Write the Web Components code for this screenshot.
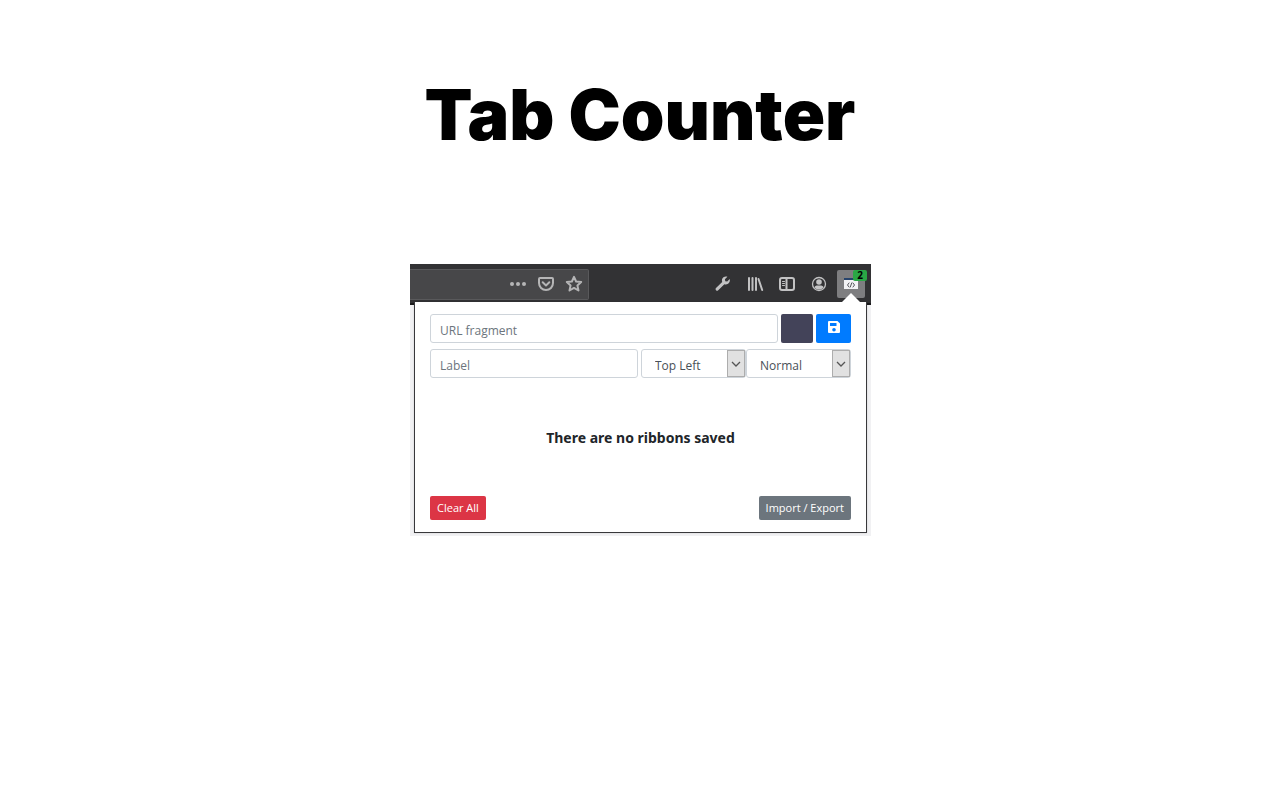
<!DOCTYPE html>
<html lang="en">
<head>
<meta charset="utf-8">
<title>Tab Counter</title>
<style>
  body { margin: 0; background: #fff; color: #212529; font-family: "Open Sans", "Noto Sans", sans-serif; font-size: 12px; }
</style>
</head>
<body>
<promo-page>
  <span slot="title">Tab Counter</span>
  <browser-toolbar></browser-toolbar>
  <ribbon-panel></ribbon-panel>
</promo-page>

<template id="promo-page">
  <style>
    :host { display: flex; flex-direction: column; align-items: center; padding-top: 66px; }
    h1 { margin: 0; color: #000; font: 900 70px/98px Inter, sans-serif; }
    main { width: 100%; max-width: 461px; margin: 100px 0 0 1px; padding-bottom: 3px; background: #f1f1f3; }
  </style>
  <h1><slot name="title"></slot></h1>
  <main><slot></slot></main>
</template>

<template id="browser-toolbar">
  <style>
    :host { display: flex; justify-content: space-between; box-sizing: border-box; height: 41px; padding: 5px 6px 5px 0; background: #323234; border-bottom: 2px solid #1a1a1c; }
    .address { display: flex; flex: 0 1 179px; box-sizing: border-box; height: 31px; align-items: center; justify-content: flex-end; gap: 10px; padding: 0 5px 2px 0; background: #474749; border: 1px solid #59595b; border-left: 0; border-radius: 0 2px 2px 0; }
    .tools { display: flex; gap: 4px; padding-top: 1px; }
    button { display: grid; place-items: center; width: 28px; height: 28px; padding: 0; border: 0; background: none; color: #c2c2c3; }
    .address button { width: 18px; color: #b5b5b6; }
    svg { display: block; width: 18px; height: 18px; fill: none; stroke: currentColor; stroke-width: 2; stroke-linecap: round; stroke-linejoin: round; }
    .on { position: relative; background: #7e7e80; border-radius: 2px; }
    .badge { position: absolute; top: 0; right: -2px; width: 14px; border-radius: 2px; background: #2aa745; color: #000; font: 700 10px/11px "Open Sans", sans-serif; text-align: center; }
  </style>
  <div class="address">
    <button aria-label="Page actions"><svg viewBox="0 0 18 18"><g fill="currentColor" stroke="none"><circle cx="3" cy="9" r="2"/><circle cx="9" cy="9" r="2"/><circle cx="15" cy="9" r="2"/></g></svg></button>
    <button aria-label="Save to Pocket"><svg viewBox="0 0 18 18"><path d="M3 3h12a1 1 0 0 1 1 1v4a7 7 0 0 1-14 0V4a1 1 0 0 1 1-1z"/><path d="M5.700 7.300L9 10.400l3.300-3.100"/></svg></button>
    <button aria-label="Bookmark"><svg viewBox="0 0 18 18"><path d="M9 1.800l2.100 4.700 5.100.5-3.800 3.400 1.100 5.100L9 12.900l-4.500 2.600 1.100-5.100L1.800 7l5.100-.5z"/></svg></button>
  </div>
  <div class="tools">
    <button aria-label="Developer tools"><svg viewBox="0 0 18 18"><path fill="currentColor" stroke="none" d="M15.700 4.100l-2.500 2.500-1.900-.4-.4-1.900 2.500-2.500C11 1 8.500 2.300 8 4.600c-.2.900-.1 1.500.2 2.300L2 13.100a1.500 1.500 0 0 0 2.200 2.200l6.200-6.100c3.100 1.200 6.300-1.600 5.300-5.100z"/></svg></button>
    <button aria-label="Library"><svg viewBox="0 0 18 18"><path d="M3 3v12M6.500 3v12M10 3v12M12.500 4l3.700 11"/></svg></button>
    <button aria-label="Sidebars"><svg viewBox="0 0 18 18"><rect x="2" y="3" width="14" height="12" rx="2"/><path d="M8.500 3v12"/><path stroke-width="1" d="M4.500 6.500h2M4.500 8.500h2M4.500 10.500h2"/></svg></button>
    <button aria-label="Account"><svg viewBox="0 0 18 18"><circle cx="9" cy="9" r="6.500" stroke-width="1.300"/><g fill="currentColor" stroke="none"><circle cx="9" cy="7" r="2.800"/><path d="M4.400 12.300c.8-1.500 2.300-1.700 3.200-1.700h2.800c.9 0 2.400.2 3.200 1.700C12.500 13.900 10.900 14.600 9 14.600s-3.500-.7-4.600-2.300z"/></g></svg></button>
    <button class="on" aria-label="Ribbons"><svg viewBox="0 0 18 18"><path stroke="none" fill="#f3f3f5" d="M2 5h14v9H2z"/><path stroke="none" fill="#26436c" d="M2 3h14v2H2z"/><path stroke="#55555b" stroke-width="1" d="M7 8L5.500 10 7 12M11 8l1.500 2-1.500 2M8.300 12l1.400-4"/></svg><span class="badge">2</span></button>
  </div>
</template>

<template id="ribbon-panel">
  <style>
    :host { display: block; position: relative; box-sizing: border-box; margin: -3px 4px 0; padding: 12px 15px; background: #fff; border: 1px solid #38383b; border-top-width: 0; box-shadow: 0 0 2px #0002; }
    .tip { position: absolute; top: -9px; right: 6px; width: 18px; height: 9px; background: #fff; clip-path: polygon(50% 0, 100% 100%, 0 100%); }
    .row { display: grid; gap: 3px; margin-bottom: 6px; }
    .first { grid-template-columns: 1fr 32px 35px; }
    .second { grid-template-columns: 1fr 210px; }
    .pair { display: grid; grid-template-columns: 1fr 1fr; }
    input { box-sizing: border-box; width: 100%; min-width: 0; height: 29px; padding: 3px 9px 0; border: 1px solid #ced4da; border-radius: 3px; font: inherit; background: #fff; color: #495057; }
    input::placeholder { color: #6c757d; opacity: 1; }
    button { border: 0; border-radius: 2px; color: #fff; font: inherit; }
    .colour { background: #434359; }
    .save { display: grid; place-items: center; padding: 0 0 3px; background: #007bff; }
    .save svg { width: 14px; height: 14px; }
    p { margin: 0; padding: 42px 0 46px; font: 700 14px/24px "Noto Sans", sans-serif; text-align: center; }
    footer { display: flex; justify-content: space-between; }
    footer button { height: 24px; padding: 0 7px 2px; font-size: 11px; }
    .clear { background: #dc3545; }
    .io { background: #6c757d; }
  </style>
  <span class="tip"></span>
  <div class="row first">
    <input type="text" placeholder="URL fragment" aria-label="URL fragment">
    <button class="colour" aria-label="Ribbon colour"></button>
    <button class="save" aria-label="Save"><svg viewBox="0 0 14 14"><path fill="#fff" fill-rule="evenodd" d="M2 1h8.500L13 3.500V12a1 1 0 0 1-1 1H2a1 1 0 0 1-1-1V2a1 1 0 0 1 1-1zM3 3v3h6.500V3zM7 8a1.800 1.800 0 1 0 0 3.600A1.800 1.800 0 0 0 7 8z"/></svg></button>
  </div>
  <div class="row second">
    <input type="text" placeholder="Label" aria-label="Label">
    <div class="pair">
      <drop-down label="Position" options="Top Left,Top Right,Bottom Left,Bottom Right"></drop-down>
      <drop-down label="Size" options="Normal,Small,Large"></drop-down>
    </div>
  </div>
  <p>There are no ribbons saved</p>
  <footer>
    <button class="clear">Clear All</button>
    <button class="io">Import / Export</button>
  </footer>
</template>

<template id="drop-down">
  <style>
    :host { display: grid; grid-template-columns: 1fr 18px; box-sizing: border-box; height: 29px; border: 1px solid #ced4da; border-radius: 3px; background: #fff; }
    select { grid-area: 1 / 1 / 2 / 3; appearance: none; width: 100%; padding: 3px 20px 0 13px; border: 0; background: none; color: #495057; font: inherit; }
    .arrow { grid-area: 1 / 2; display: grid; place-items: center; box-sizing: border-box; border: 1px solid #adadad; background: #e1e1e1; pointer-events: none; }
    svg { width: 10px; height: 6px; fill: none; stroke: #555; stroke-width: 1.300; }
  </style>
  <select></select>
  <span class="arrow"><svg viewBox="0 0 10 6"><path d="M1 1l4 4 4-4"/></svg></span>
</template>

<script>
  class TemplateElement extends HTMLElement {
    constructor() {
      super();
      const template = document.getElementById(this.localName);
      this.attachShadow({ mode: "open" }).append(template.content.cloneNode(true));
    }
  }
  class DropDown extends TemplateElement {
    connectedCallback() {
      const select = this.shadowRoot.querySelector("select");
      select.setAttribute("aria-label", this.getAttribute("label"));
      select.replaceChildren(...this.getAttribute("options").split(",").map(text => new Option(text)));
    }
  }
  customElements.define("drop-down", DropDown);
  customElements.define("browser-toolbar", class extends TemplateElement {});
  customElements.define("ribbon-panel", class extends TemplateElement {});
  customElements.define("promo-page", class extends TemplateElement {});
</script>
</body>
</html>
